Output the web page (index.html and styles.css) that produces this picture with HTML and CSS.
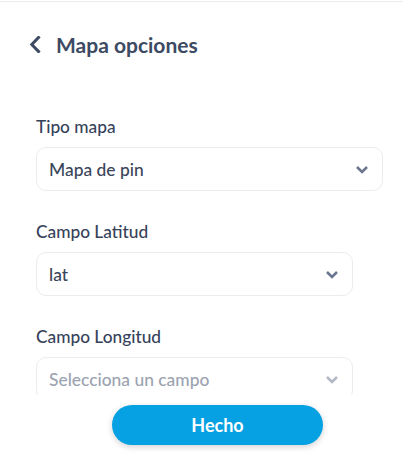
FILE: index.html
```html
<!DOCTYPE html>
<html lang="es">
<head>
<meta charset="utf-8">
<link rel="stylesheet" href="styles.css">
</head>
<body>
<div class="page">
  <div class="scroll">
    <div class="header">
      <svg class="back" width="12" height="17" viewBox="0 0 12 17"><path d="M9.5 1.5 L2.8 8.5 L9.5 15.5" fill="none" stroke="#3d4a63" stroke-width="3" stroke-linecap="square"/></svg>
      <span class="title">Mapa opciones</span>
    </div>
    <div class="field">
      <div class="label">Tipo mapa</div>
      <div class="select wide"><span class="value">Mapa de pin</span><svg class="chev" width="14" height="9" viewBox="0 0 14 9"><path d="M2 2 L7 7 L12 2" fill="none" stroke="#6b7590" stroke-width="2.6"/></svg></div>
    </div>
    <div class="field">
      <div class="label">Campo Latitud</div>
      <div class="select"><span class="value">lat</span><svg class="chev" width="14" height="9" viewBox="0 0 14 9"><path d="M2 2 L7 7 L12 2" fill="none" stroke="#6b7590" stroke-width="2.6"/></svg></div>
    </div>
    <div class="field">
      <div class="label">Campo Longitud</div>
      <div class="select"><span class="value placeholder">Selecciona un campo</span><svg class="chev" width="14" height="9" viewBox="0 0 14 9"><path d="M2 2 L7 7 L12 2" fill="none" stroke="#b3b8c4" stroke-width="2.6"/></svg></div>
    </div>
  </div>
  <div class="footer">
    <button class="done">Hecho</button>
  </div>
</div>
</body>
</html>
```
FILE: styles.css
```css
html, body {
  margin: 0;
  padding: 0;
  background: #fff;
}
body {
  font-family: Lato, "Open Sans", sans-serif;
  color: #3a4559;
}
.page {
  width: 403px;
  height: 461px;
  display: flex;
  flex-direction: column;
  padding-top: 1px;
  box-sizing: border-box;
}
.scroll {
  height: 394px;
  overflow: hidden;
  border-top: 1px solid #ededed;
  padding-left: 36px;
  box-sizing: border-box;
}
.header {
  display: flex;
  align-items: center;
  height: 28px;
  margin-top: 28px;
  margin-left: -7px;
  gap: 15px;
}
.back {
  display: block;
}
.title {
  font-size: 21px;
  font-weight: 700;
  color: #3d4a63;
}
.header + .field {
  margin-top: 57px;
}
.label {
  font-size: 17.3px;
  font-weight: 500;
  line-height: 24px;
  height: 24px;
  margin-bottom: 8px;
  color: #36425a;
}
.select {
  width: 317px;
  height: 44px;
  border: 1px solid #ececec;
  border-radius: 10px;
  box-sizing: border-box;
  display: flex;
  align-items: center;
  justify-content: space-between;
  padding: 0 13px 0 12px;
  margin-bottom: 29px;
}
.select.wide {
  width: 347px;
}
.value {
  font-size: 17.4px;
  font-weight: 500;
  color: #3a4559;
}
.placeholder {
  color: #9ca3b1;
}
.chev {
  display: block;
}
.footer {
  flex: 1;
  display: flex;
  justify-content: center;
  align-items: flex-start;
  padding-top: 10px;
  padding-left: 32px;
}
.done {
  width: 211px;
  height: 40px;
  border: none;
  border-radius: 20px;
  background: #06a1e2;
  color: #fff;
  font-family: Lato, "Open Sans", sans-serif;
  font-size: 18px;
  font-weight: 700;
  box-shadow: 0 2px 6px rgba(0, 0, 0, 0.18);
}
```
